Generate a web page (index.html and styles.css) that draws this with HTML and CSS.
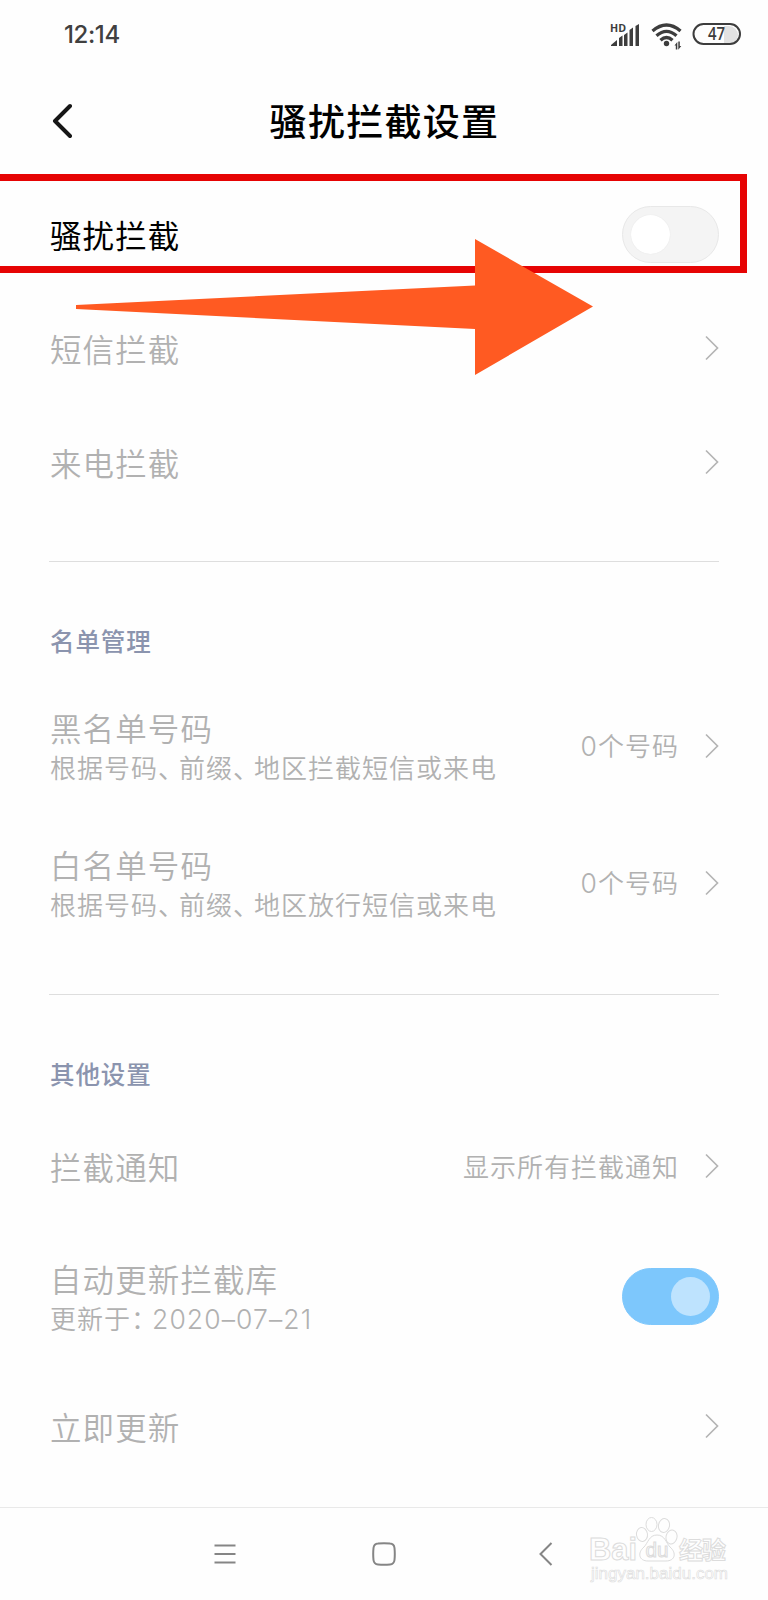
FILE: index.html
```html
<!DOCTYPE html>
<html lang="zh-CN">
<head>
<meta charset="utf-8">
<title>骚扰拦截设置</title>
<link rel="stylesheet" href="styles.css">
</head>
<body>
<div class="screen">
  <header class="status">
    <span class="clock">12:14</span>
    <svg class="status-icons" width="134" height="30" viewBox="0 0 134 30">
      <g fill="#3d3d3d">
        <path d="M1 24v-1l6-5v6zM9 24v-8l3.500-2.500V24zM14 24V13l3.500-2.500V24zM19.500 24V8L23 5.500V24zM25.500 24V4L29 2v22z"/>
        <text class="hd" x="0" y="9.500" textLength="16" lengthAdjust="spacingAndGlyphs">HD</text>
        <circle cx="56.500" cy="21.500" r="2.700"/>
        <path d="M64.500 23.500l2.800-3.500v7.500h-1.500v-4zM68.300 19.500h1.500v4.500h1.500l-3 3.700z"/>
      </g>
      <g fill="none" stroke="#3d3d3d" stroke-width="3.300">
        <path d="M42.500 9Q56.500-3 70.500 9"/>
        <path d="M46.500 13.800Q56.500 5 66.500 13.800"/>
        <path d="M50.500 18.300Q56.500 12.500 62.500 18.300"/>
      </g>
      <path d="M114 4h5a9 9 0 0 1 0 18h-5z" fill="#e2e2e2"/>
      <rect x="83.500" y="2" width="46.500" height="20" rx="10" fill="none" stroke="#3d3d3d" stroke-width="2"/>
      <text class="level" x="98" y="18" textLength="17" lengthAdjust="spacingAndGlyphs" fill="#3d3d3d">47</text>
    </svg>
  </header>

  <div class="titlebar">
    <svg class="back" width="22" height="36" viewBox="0 0 22 36"><path d="M20 3L5 18l15 15"/></svg>
    <h1 class="title">骚扰拦截设置</h1>
  </div>

  <main class="settings">
    <section class="group">
      <div class="row"><span class="label active">骚扰拦截</span><span class="switch"><span class="knob"></span></span></div>
      <div class="row"><span class="label">短信拦截</span><svg class="chevron" viewBox="0 0 14 26"><path d="M1 1.500L12.500 13 1 24.500"/></svg></div>
      <div class="row"><span class="label">来电拦截</span><svg class="chevron" viewBox="0 0 14 26"><path d="M1 1.500L12.500 13 1 24.500"/></svg></div>
    </section>

    <section class="group">
      <h2 class="heading">名单管理</h2>
      <div class="row double">
        <div class="texts"><span class="label">黑名单号码</span><span class="desc">根据号码<span class="mark">、</span>前缀<span class="mark">、</span>地区拦截短信或来电</span></div>
        <span class="value"><span class="digit">0</span>个号码</span><svg class="chevron" viewBox="0 0 14 26"><path d="M1 1.500L12.500 13 1 24.500"/></svg>
      </div>
      <div class="row double">
        <div class="texts"><span class="label">白名单号码</span><span class="desc">根据号码<span class="mark">、</span>前缀<span class="mark">、</span>地区放行短信或来电</span></div>
        <span class="value"><span class="digit">0</span>个号码</span><svg class="chevron" viewBox="0 0 14 26"><path d="M1 1.500L12.500 13 1 24.500"/></svg>
      </div>
    </section>

    <section class="group last">
      <h2 class="heading">其他设置</h2>
      <div class="row"><span class="label">拦截通知</span><span class="value">显示所有拦截通知</span><svg class="chevron" viewBox="0 0 14 26"><path d="M1 1.500L12.500 13 1 24.500"/></svg></div>
      <div class="row update">
        <div class="texts"><span class="label">自动更新拦截库</span><span class="desc">更新于<span class="mark">：</span><span class="date">2020–07–21</span></span></div>
        <span class="switch on"><span class="knob"></span></span>
      </div>
      <div class="row"><span class="label">立即更新</span><svg class="chevron" viewBox="0 0 14 26"><path d="M1 1.500L12.500 13 1 24.500"/></svg></div>
    </section>
  </main>

  <footer class="nav">
    <svg width="22" height="24" viewBox="0 0 22 24"><path d="M.5 3.500h21M.5 12h21M.5 20.500h21"/></svg>
    <svg class="home" width="24" height="24" viewBox="0 0 24 24"><path d="M6 1.500Q12 .9 18 1.500 22 1.700 22.500 6 23.100 12 22.500 18 22 22.200 18 22.500 12 23 6 22.500 2 22.200 1.500 18 .9 12 1.500 6 2 1.700 6 1.500z"/></svg>
    <svg width="14" height="24" viewBox="0 0 14 24"><path d="M12.500 1L1.500 12l11 11"/></svg>
  </footer>

  <div class="highlight"></div>
  <svg class="arrow" width="518" height="138" viewBox="0 0 518 138"><path d="M0 66L399 46.500V0l118 67.500L399 136V90L0 70z"/></svg>
  <svg class="watermark" width="150" height="76" viewBox="0 0 150 76">
    <g>
      <ellipse cx="57" cy="31.500" rx="5.500" ry="7" transform="rotate(-8 57 31.500)"/><ellipse cx="66.500" cy="21.500" rx="5.500" ry="7"/>
      <ellipse cx="79" cy="22.500" rx="5.500" ry="7" transform="rotate(12 79 22.500)"/><ellipse cx="86.500" cy="34" rx="5.500" ry="7" transform="rotate(15 86.500 34)"/>
      <path d="M72 32c8 0 9 8 13 12 7 6 5 14-4 14H63c-9 0-11-8-4-14 4-4 5-12 13-12z"/>
    </g>
    <text class="brand" x="4" y="57" textLength="48" lengthAdjust="spacingAndGlyphs">Bai</text>
    <text class="du" x="60.500" y="54" textLength="23" lengthAdjust="spacingAndGlyphs">du</text>
    <text class="cn" x="94" y="56" textLength="47">经验</text>
    <text class="site" x="6" y="76" textLength="137" lengthAdjust="spacingAndGlyphs">jingyan.baidu.com</text>
  </svg>
</div>
</body>
</html>
```

FILE: styles.css
```css
* { box-sizing: border-box; }
body {
  margin: 0;
  background: #fefefe;
  font-family: "Noto Sans CJK SC", sans-serif;
}
.screen {
  position: relative;
  width: 768px;
  height: 1600px;
  overflow: hidden;
  display: flex;
  flex-direction: column;
}
.status {
  height: 68px;
  padding: 0 27px 0 64px;
  display: flex;
  align-items: center;
  justify-content: space-between;
}
.clock {
  padding-top: 1px;
  font: 500 24px/1 Inter, sans-serif;
  letter-spacing: -.4px;
  color: #404040;
}
.status-icons { margin: 5px -3px 0 0; overflow: visible; }
.hd { font: 700 11px "Open Sans", sans-serif; }
.level { font: 600 17.500px "Open Sans", sans-serif; }
.titlebar {
  height: 109px;
  display: grid;
  grid-template-columns: 50px 1fr 50px;
  align-items: center;
}
.back { margin: 0 0 4px 50px; fill: none; stroke: #161616; stroke-width: 4; stroke-linecap: round; stroke-linejoin: round; }
.title {
  margin: 0 0 5px;
  padding-left: 1px;
  text-align: center;
  font-size: 37px;
  line-height: 54px;
  font-weight: 500;
  letter-spacing: 1.300px;
  color: #000;
}
.settings { padding: 0 49px; height: 1330px; }
.group { padding-bottom: 42px; }
.group + .group { border-top: 1px solid #dedede; }
.group.last { margin-top: 1px; }
.last .heading { margin-bottom: -1px; }
.heading {
  margin: 0;
  height: 115px;
  padding-left: 1px;
  font-size: 24.500px;
  line-height: 157px;
  font-weight: 500;
  letter-spacing: .900px;
  color: #8b94ae;
}
.row {
  height: 114px;
  display: flex;
  align-items: center;
}
.double { height: 137px; }
.update { height: 146px; }
.texts { display: flex; flex-direction: column; flex: 1; }
.double .texts { padding-top: 1px; }
.update .texts { padding-top: 3px; }
.label {
  flex: 1 0 auto;
  padding: 0 0 1px 1px;
  font-size: 31.500px;
  line-height: 42px;
  font-weight: 350;
  letter-spacing: 1.100px;
  color: #b1b1b1;
}
.active { color: #000; font-weight: 400; }
.desc, .value {
  padding-bottom: 1px;
  font-size: 26px;
  line-height: 36px;
  font-weight: 350;
  letter-spacing: 1px;
  color: #b1b1b1;
  white-space: nowrap;
}
.desc { padding-left: 1px; }
.mark { font-feature-settings: "halt"; margin-right: 7px; }
.date { font-family: Inter, sans-serif; font-size: 26.500px; letter-spacing: 1.100px; }
.digit { font-family: Inter, sans-serif; font-size: 26.500px; }
.value { margin-right: 26px; }
.chevron {
  width: 14px;
  height: 26px;
  fill: none;
  stroke: #b5b5b5;
  stroke-width: 1.700;
}
.switch {
  width: 97px;
  height: 57px;
  padding: 0 8px;
  border: 1px solid #e8e8e8;
  border-radius: 29px;
  background: #f4f4f4;
  display: flex;
  align-items: center;
}
.knob { width: 39px; height: 39px; border-radius: 50%; background: #fff; box-shadow: 0 0 1px #ddd; }
.on { background: #7dc7fc; border-color: #7dc7fc; justify-content: flex-end; }
.on .knob { background: #bee3fe; box-shadow: none; }
.nav {
  height: 93px;
  border-top: 1px solid #e9e9e9;
  padding: 0 215px 0 214px;
  display: flex;
  align-items: center;
  justify-content: space-between;
  fill: none;
  stroke: #858585;
  stroke-width: 2;
}
.home { margin-right: 8px; }
.highlight {
  position: absolute;
  left: -8px;
  top: 174px;
  width: 755px;
  height: 99px;
  border: 7px solid #e60404;
}
.arrow { position: absolute; left: 76px; top: 239px; fill: #ff5a22; }
.watermark {
  position: absolute;
  left: 585px;
  top: 1503px;
  overflow: visible;
  fill: #fefefe;
  stroke: #dcdcdc;
  stroke-width: 1;
}
.brand { font: 700 31px "Liberation Sans", sans-serif; }
.du { font: 400 20px "Liberation Sans", sans-serif; }
.cn { font: 700 24px "Noto Sans CJK SC", sans-serif; }
.site { font: 400 17px "Liberation Sans", sans-serif; stroke-width: .6; }
```
